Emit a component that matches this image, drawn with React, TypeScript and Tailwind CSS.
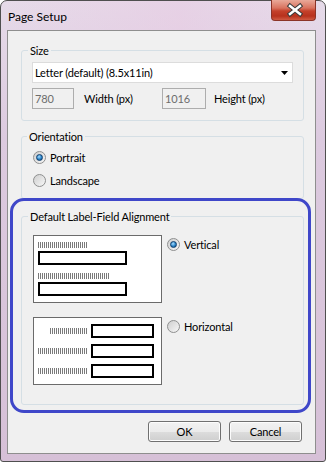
function Radio({ checked }: { checked?: boolean }) {
  return (
    <span className="flex h-[13px] w-[13px] shrink-0 items-center justify-center rounded-full border border-[#8e8f8f] bg-[image:linear-gradient(135deg,#cfcfcf,#f7f7f7)]">
      {checked && (
        <span className="h-[7px] w-[7px] rounded-full border border-[#0f3f6e] bg-[image:radial-gradient(circle_at_40%_35%,#a6dcff,#2a84c8_55%,#0d4478)]" />
      )}
    </span>
  )
}

function Hatch({ w }: { w: string }) {
  return (
    <div
      className={`h-[6px] ${w} bg-[image:repeating-linear-gradient(90deg,#7a7a7a_0px,#7a7a7a_1px,transparent_1px,transparent_2px)]`}
    />
  )
}

function Button({ label }: { label: string }) {
  return (
    <div className="flex h-[21px] w-[73px] items-center justify-center rounded-[3px] border border-[#707070] bg-[image:linear-gradient(180deg,#f2f2f2_0%,#ebebeb_50%,#dddddd_51%,#cfcfcf_100%)] shadow-[inset_0_0_0_1px_#fcfcfc]">
      {label}
    </div>
  )
}

function CloseButton() {
  return (
    <div className="-mt-px mr-[9px] h-[21px] w-[45px] rounded-b-[4px] border border-t-0 border-[#8b3427] bg-[image:linear-gradient(180deg,#e9a999_0%,#d9735f_40%,#c4412b_55%,#b8321d_80%,#cf5a43_100%)]">
      <svg width="45" height="20" viewBox="0 0 45 20">
        <path d="M18 6 L28 14 M28 6 L18 14" stroke="#3a3a3a" strokeWidth="4.5" strokeLinecap="square" />
        <path d="M18 6 L28 14 M28 6 L18 14" stroke="#ffffff" strokeWidth="2.5" strokeLinecap="square" />
      </svg>
    </div>
  )
}

export default function App() {
  return (
    <div className="h-[462px] w-[326px] font-['Lato',sans-serif] text-[11px] leading-[15px] tracking-[-0.15px] text-black">
      <div className="flex h-full flex-col rounded-t-[7px] rounded-b-[3px] border border-[#4f4f4f] bg-[image:linear-gradient(180deg,#e6dbe9_0%,#dccadf_30%,#d6c0d7_100%)]">
        <div className="flex h-[29px] items-start justify-between bg-[image:linear-gradient(90deg,transparent_0%,rgba(232,200,226,0.5)_55%,transparent_100%)]">
          <div className="ml-[7px] mt-[8px] text-[12px] tracking-normal">Page Setup</div>
          <CloseButton />
        </div>

        <div className="ml-[6px] mr-[9px] flex h-[424px] flex-col border border-[#8e8e8e] bg-[#f0f0f0]">
          <fieldset className="ml-[13px] mr-[11px] mt-[12px] rounded-[3px] border border-[#d5dfe5]">
            <legend className="ml-[6px] px-[2px]">Size</legend>
            <div className="px-[10px] pb-[11px] pt-[4px]">
              <div className="flex h-[21px] items-center justify-between border border-[#dcdcdc] bg-white pl-[2px] pr-[4px]">
                <span>Letter (default) (8.5x11in)</span>
                <svg width="7" height="4" viewBox="0 0 7 4">
                  <path d="M0 0 H7 L3.5 4 Z" fill="#000" />
                </svg>
              </div>
              <div className="mt-[5px] flex items-center">
                <div className="flex h-[21px] w-[42px] items-center border border-[#adadad] pl-[2px] text-[#6d6d6d]">780</div>
                <div className="ml-[10px] w-[78px]">Width (px)</div>
                <div className="flex h-[21px] w-[44px] items-center border border-[#adadad] pl-[2px] text-[#6d6d6d]">1016</div>
                <div className="ml-[8px]">Height (px)</div>
              </div>
            </div>
          </fieldset>

          <fieldset className="ml-[13px] mr-[11px] mt-[8px] rounded-[3px] border border-[#d5dfe5]">
            <legend className="ml-[5px] px-[2px]">Orientation</legend>
            <div className="flex flex-col gap-[8px] pb-[10px] pl-[11px] pt-[6px]">
              <div className="flex h-[15px] items-center gap-[4px]">
                <Radio checked />
                <span>Portrait</span>
              </div>
              <div className="flex h-[15px] items-center gap-[4px]">
                <Radio />
                <span>Landscape</span>
              </div>
            </div>
          </fieldset>

          <div className="relative -mt-px ml-[2px] mr-[4px] rounded-[14px] border-[3px] border-[#3f47c9] pb-[5px] pl-[8px] pr-[4px] pt-[8px]">
            <fieldset className="rounded-[3px] border border-[#d5dfe5]">
              <legend className="ml-[6px] px-[2px]">Default Label-Field Alignment</legend>
              <div className="pb-[19px] pl-[11px] pt-[11px]">
                <div className="flex items-start">
                  <div className="h-[68px] w-[129px] border border-[#6b6b6b] bg-white pl-[4px] pt-[6px]">
                    <Hatch w="w-[50px]" />
                    <div className="mt-[3px] h-[14px] w-[89px] border-2 border-black" />
                    <div className="mt-[8px]">
                      <Hatch w="w-[72px]" />
                    </div>
                    <div className="mt-[3px] h-[14px] w-[89px] border-2 border-black" />
                  </div>
                  <div className="ml-[5px] mt-[2px] flex h-[15px] items-center gap-[4px]">
                    <Radio checked />
                    <span>Vertical</span>
                  </div>
                </div>

                <div className="mt-[14px] flex items-start">
                  <div className="flex h-[68px] w-[129px] flex-col gap-[6px] border border-[#6b6b6b] bg-white pr-[7px] pt-[6px]">
                    <div className="flex items-center justify-end gap-[3px]">
                      <Hatch w="w-[38px]" />
                      <div className="h-[14px] w-[63px] border-2 border-black" />
                    </div>
                    <div className="flex items-center justify-end gap-[3px]">
                      <Hatch w="w-[50px]" />
                      <div className="h-[14px] w-[63px] border-2 border-black" />
                    </div>
                    <div className="flex items-center justify-end gap-[3px]">
                      <Hatch w="w-[50px]" />
                      <div className="h-[14px] w-[63px] border-2 border-black" />
                    </div>
                  </div>
                  <div className="ml-[5px] mt-[2px] flex h-[15px] items-center gap-[4px]">
                    <Radio />
                    <span>Horizontal</span>
                  </div>
                </div>
              </div>
            </fieldset>
          </div>

          <div className="mr-[13px] mt-[8px] flex justify-end gap-[8px]">
            <Button label="OK" />
            <Button label="Cancel" />
          </div>
        </div>
      </div>
    </div>
  )
}
